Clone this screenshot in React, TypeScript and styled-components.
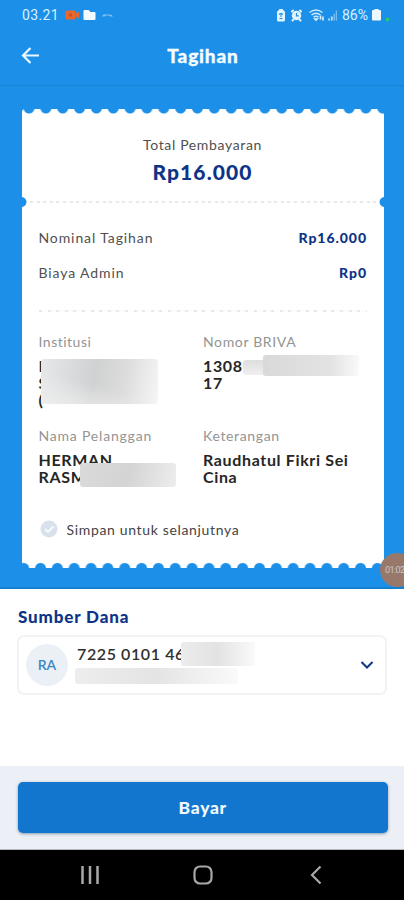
import React from 'react';
import styled, { createGlobalStyle } from 'styled-components';

const blue = '#1c90e8';
const navy = '#0d3487';

const Global = createGlobalStyle`
  * { box-sizing: border-box; }
  body { margin: 0; background: #fff; font-family: Lato, "Open Sans", sans-serif; }
  svg { display: block; flex: none; }
`;

const Screen = styled.div`
  width: 404px;
  height: 900px;
  display: flex;
  flex-direction: column;
  overflow: hidden;
  background: #fff;
`;

const StatusBar = styled.div`
  height: 30px;
  flex: none;
  display: flex;
  align-items: center;
  justify-content: space-between;
  padding: 0 13px 0 22px;
  background: ${blue};
  color: #d9f1ff;
  font: 400 14px/30px Roboto, sans-serif;
`;

const StatusGroup = styled.div`
  display: flex;
  align-items: center;
  height: 30px;
`;

const Clock = styled.span`
  width: 43px;
  letter-spacing: 0.35px;
`;

const Battery = styled.span`
  margin-left: 5px;
  width: 30px;
  letter-spacing: 0;
`;

const Header = styled.header`
  height: 56px;
  flex: none;
  display: grid;
  grid-template-columns: 60px 1fr 60px;
  align-items: center;
  padding-bottom: 4px;
  background: ${blue};
  border-bottom: 1px solid #1a84d5;
`;

const Back = styled.div`
  padding-left: 21px;
`;

const Title = styled.h1`
  margin: 0;
  padding-left: 2px;
  text-align: center;
  color: #f4fcff;
  font-size: 19px;
  font-weight: 900;
  line-height: 24px;
  letter-spacing: 0.85px;
  -webkit-text-stroke: 0.3px #f4fcff;
`;

const BillArea = styled.main`
  position: relative;
  height: 503px;
  flex: none;
  padding: 23px 20.5px 0 21.5px;
  background: ${blue};
  border-bottom: 2px solid #1580d0;
`;

const Ticket = styled.section`
  height: 459px;
  display: flex;
  flex-direction: column;
`;

const Edge = styled.div<{ $bottom?: boolean }>`
  height: 6px;
  flex: none;
  border-radius: ${p => (p.$bottom ? '0 0 6px 6px' : '3px 6px 0 0')};
  background-color: #fff;
  background-image: radial-gradient(
    circle at 50% ${p => (p.$bottom ? '6.5px' : '-1px')},
    ${blue} 4.9px, transparent 6.1px
  );
  background-size: 16.85px 6px;
  background-position-x: ${p => (p.$bottom ? '10.1px' : '-1.4px')};
`;

const Summary = styled.div`
  height: 82px;
  padding-top: 20px;
  background: #fff;
  text-align: center;
  color: #505050;
  font-size: 14px;
  line-height: 20px;
  letter-spacing: 0.65px;
`;

const Amount = styled.div`
  margin-top: 3px;
  color: ${navy};
  font-size: 21px;
  font-weight: 900;
  line-height: 27px;
  letter-spacing: 1.1px;
`;

const Perforation = styled.div`
  height: 10px;
  display: flex;
  align-items: center;
  padding: 0 8px;
  background:
    radial-gradient(circle at -0.5px 50%, ${blue} 4.5px, transparent 5.4px),
    radial-gradient(circle at 362.5px 50%, ${blue} 4.5px, transparent 5.4px),
    #fff;
`;

const Dots = styled.div<{ $gap: number }>`
  flex: 1;
  height: 2px;
  background: repeating-linear-gradient(90deg, #e6eaec 0 3px, #fbfcfc 3px ${p => p.$gap}px);
`;

const Details = styled.div`
  flex: 1;
  padding: 13px 17px 0 17px;
  background: #fff;
`;

const FeeRow = styled.div`
  height: 35px;
  display: flex;
  align-items: center;
  justify-content: space-between;
  color: #505050;
  font-size: 14px;
  letter-spacing: 0.9px;
`;

const Fee = styled.strong`
  margin-right: -0.5px;
  color: ${navy};
  font-weight: 900;
  letter-spacing: 0.95px;
`;

const Rule = styled.div`
  display: flex;
  padding-top: 20px;
  height: 38px;
`;

const Fields = styled.div`
  display: grid;
  grid-template-columns: 164.5px 1fr;
  grid-auto-rows: 94px;
`;

const Field = styled.div`
  padding-top: 4px;
`;

const Label = styled.div<{ $spacing?: number }>`
  color: #949494;
  font-size: 14px;
  line-height: 20px;
  letter-spacing: ${p => p.$spacing ?? 0.65}px;
`;

const Value = styled.div`
  position: relative;
  margin-top: 5px;
  height: 51px;
  color: #262626;
  font-size: 16px;
  font-weight: 700;
  line-height: 17px;
  letter-spacing: 0.65px;
  white-space: pre-line;
`;

const Redaction = styled.div<{ $x: number; $y: number; $w: number; $h: number; $fill: string }>`
  position: absolute;
  left: ${p => p.$x}px;
  top: ${p => p.$y}px;
  width: ${p => p.$w}px;
  height: ${p => p.$h}px;
  border-radius: 3px;
  background: ${p => p.$fill};
`;

const SaveOption = styled.div`
  height: 20px;
  display: flex;
  align-items: center;
  gap: 9px;
  margin-top: 3px;
  padding-left: 1px;
  color: #444;
  font-size: 14px;
  letter-spacing: 0.66px;
`;

const Recorder = styled.div`
  position: absolute;
  left: 380px;
  top: 467px;
  width: 34px;
  height: 34px;
  padding-left: 5px;
  border-radius: 50%;
  background: #99786c;
  color: #c9c6c2;
  font: 400 9px/34px Roboto, sans-serif;
  letter-spacing: -0.6px;
`;

const Source = styled.section`
  flex: 1;
  padding: 18px 17px 0;
`;

const SourceTitle = styled.h2`
  margin: 0 0 8px 1px;
  color: ${navy};
  font-size: 17px;
  font-weight: 900;
  line-height: 20px;
  letter-spacing: 0.85px;
`;

const Account = styled.div`
  width: 370px;
  height: 60px;
  display: flex;
  align-items: center;
  padding: 0 11px 0 7px;
  border: 2px solid #f3f3f5;
  border-radius: 7px;
`;

const Avatar = styled.div`
  width: 42px;
  height: 42px;
  border-radius: 50%;
  background: #ebf0f6;
  color: #3c87c0;
  text-align: center;
  font-size: 14px;
  line-height: 42px;
  font-weight: 600;
`;

const AccountText = styled.div`
  position: relative;
  flex: 1;
  height: 44px;
  margin-left: 9px;
  padding-top: 1px;
  color: #303030;
  font-size: 16px;
  font-weight: 600;
  line-height: 20px;
  letter-spacing: 0.6px;
`;

const Footer = styled.footer`
  height: 84px;
  flex: none;
  padding: 16px 16px 0 17.5px;
  background: #ecf0f6;
  border-bottom: 1px solid #b5b9bd;
`;

const PayButton = styled.button`
  display: block;
  width: 100%;
  height: 51px;
  padding: 0;
  border: 0;
  border-radius: 5px;
  background: #1276cf;
  box-shadow: 0 1px 3px rgba(40, 70, 110, 0.5);
  color: #f2faff;
  font: 900 17.5px/51px Lato, sans-serif;
  letter-spacing: 0.7px;
`;

const NavBar = styled.nav`
  height: 50px;
  flex: none;
  display: grid;
  grid-template-columns: repeat(3, 113px);
  justify-content: center;
  justify-items: center;
  align-items: center;
  background: #000;
  padding-left: 2px;
`;

export default function App() {
  return (
    <Screen>
      <Global />
      <StatusBar>
        <StatusGroup>
          <Clock>03.21</Clock>
          <svg width="50" height="14" viewBox="0 0 50 14">
            <rect x="0.5" y="2.5" width="10" height="9" rx="1.5" fill="#e8672c" />
            <path d="M10 6l4-2.5v7L10 8z" fill="#e8672c" />
            <circle cx="5.5" cy="7" r="1.7" fill="#c9542a" />
            <path d="M18.5 3q0-1 1-1h4l2 2h4q1 0 1 1v6q0 1-1 1h-10q-1 0-1-1z" fill="#f3fbff" />
            <path d="M37 8.5q1-3 3-2h5q2 0 3 2h-3l-1-1h-3l-1 1z" fill="#7fbff0" />
          </svg>
        </StatusGroup>
        <StatusGroup>
          <svg width="63" height="16" viewBox="0 0 63 16">
            <path d="M4 4l1.500-2h3l1.500 2q1 0 1 1v8q0 1.500-1.500 1.500h-5Q3 14.500 3 13V5q0-1 1-1z" fill="#e2f4ff" />
            <path d="M5 7.500q2-2 4 0M5.500 11.500h3M7 7v3" fill="none" stroke={blue} strokeWidth="1.100" />
            <circle cx="22.500" cy="8.500" r="4.700" fill="#e2f4ff" />
            <path d="M18 4.500l1-1M27 4.500l-1-1M19.500 12.500l-1 1M25.500 12.500l1 1" stroke="#e2f4ff" strokeWidth="2" strokeLinecap="round" />
            <path d="M22.500 6v2.800h2.300" fill="none" stroke={blue} strokeWidth="1.200" />
            <path d="M35.500 5.500q6.500-5 13 0M37.500 8q4.500-3.500 9 0M39.500 10.300q2.500-2 5 0" fill="none" stroke="#cdeaff" strokeWidth="1.400" />
            <path d="M41 12h2l-1 1zM46.500 11V8.500v4M49 9.500v4" stroke="#dff3ff" fill="none" strokeWidth="1.600" />
            <path d="M55 13.500v-2M57.800 13.500V9.500" stroke="#b9e0fb" strokeWidth="1.800" />
            <path d="M60.300 13.500V7M62.500 13.500V3.500" stroke="#75bcf1" strokeWidth="1.500" />
          </svg>
          <Battery>86%</Battery>
          <svg width="19" height="16" viewBox="0 0 19 16">
            <path d="M0 4q0-1 1-1h1.500V2h4v1H8q1 0 1 1v8.500q0 1-1 1H1q-1 0-1-1z" fill="#eef9ff" />
            <circle cx="15.500" cy="12.500" r="1.800" fill="#22d454" />
          </svg>
        </StatusGroup>
      </StatusBar>
      <Header>
        <Back>
          <svg width="19" height="18" viewBox="0 0 19 18" fill="none" stroke="#e9f8ff" strokeWidth="2.2">
            <path d="M18 8.500H2M9.500 1L2 8.500 9.500 16" />
          </svg>
        </Back>
        <Title>Tagihan</Title>
      </Header>
      <BillArea>
        <Ticket>
          <Edge />
          <Summary>
            Total Pembayaran
            <Amount>Rp16.000</Amount>
          </Summary>
          <Perforation><Dots $gap={6.6} /></Perforation>
          <Details>
            <FeeRow>Nominal Tagihan<Fee>Rp16.000</Fee></FeeRow>
            <FeeRow>Biaya Admin<Fee>Rp0</Fee></FeeRow>
            <Rule><Dots $gap={8.6} /></Rule>
            <Fields>
              <Field>
                <Label $spacing={0.5}>Institusi</Label>
                <Value>
                  {'I\nS\n('}
                  <Redaction $x={2} $y={2} $w={117} $h={45} $fill="linear-gradient(15deg, #ededed, #e0e0e000 45%), linear-gradient(100deg, #e6e8ea, #d0d1d2 45%, #dcdcdc 70%, #f6f6f6)" />
                </Value>
              </Field>
              <Field>
                <Label>Nomor BRIVA</Label>
                <Value>
                  {'130800\n17'}
                  <Redaction $x={40} $y={3} $w={24} $h={15} $fill="linear-gradient(#dedede, #efefef)" />
                  <Redaction $x={60} $y={-2} $w={96} $h={21} $fill="linear-gradient(90deg, #d9d9d9, #e3e3e3 70%, #f9f9f9)" />
                </Value>
              </Field>
              <Field>
                <Label $spacing={0.8}>Nama Pelanggan</Label>
                <Value>
                  {'HERMAN\nRASM'}
                  <Redaction $x={41} $y={12} $w={96} $h={24} $fill="linear-gradient(100deg, #dadada, #d4d4d4 50%, #ededed)" />
                </Value>
              </Field>
              <Field>
                <Label>Keterangan</Label>
                <Value>{'Raudhatul Fikri Sei\nCina'}</Value>
              </Field>
            </Fields>
            <SaveOption>
              <svg width="18" height="18" viewBox="0 0 18 18">
                <circle cx="9" cy="9" r="8.500" fill="#d9e2ec" />
                <path d="M5 9l3 3 5.500-5.500" fill="none" stroke="#f7fafc" strokeWidth="1.800" />
              </svg>
              Simpan untuk selanjutnya
            </SaveOption>
          </Details>
          <Edge $bottom />
        </Ticket>
        <Recorder>01:02</Recorder>
      </BillArea>
      <Source>
        <SourceTitle>Sumber Dana</SourceTitle>
        <Account>
          <Avatar>RA</Avatar>
          <AccountText>
            7225 0101 46
            <Redaction $x={104} $y={-1} $w={74} $h={24} $fill="linear-gradient(90deg, #ececec, #e3e3e3 50%, #fafafa)" />
            <Redaction $x={-2} $y={25} $w={163} $h={16} $fill="linear-gradient(90deg, #ededed, #e4e4e4 50%, #fafafa)" />
          </AccountText>
          <svg width="14" height="10" viewBox="0 0 14 10" fill="none" stroke={navy} strokeWidth="2">
            <path d="M1.500 2L7 7.500 12.500 2" />
          </svg>
        </Account>
      </Source>
      <Footer><PayButton>Bayar</PayButton></Footer>
      <NavBar>
        <svg width="20" height="20" viewBox="0 0 20 20" stroke="#a8a8a8" strokeWidth="2.500">
          <path d="M2.500 1v18M10 1v18M17.500 1v18" />
        </svg>
        <svg width="20" height="20" viewBox="0 0 20 20" fill="none" stroke="#a8a8a8" strokeWidth="2.200">
          <rect x="1.500" y="1.500" width="17" height="17" rx="5.500" />
        </svg>
        <svg width="12" height="20" viewBox="0 0 12 20" fill="none" stroke="#a8a8a8" strokeWidth="2.200">
          <path d="M10.500 1.500L2 10l8.500 8.500" />
        </svg>
      </NavBar>
    </Screen>
  );
}
